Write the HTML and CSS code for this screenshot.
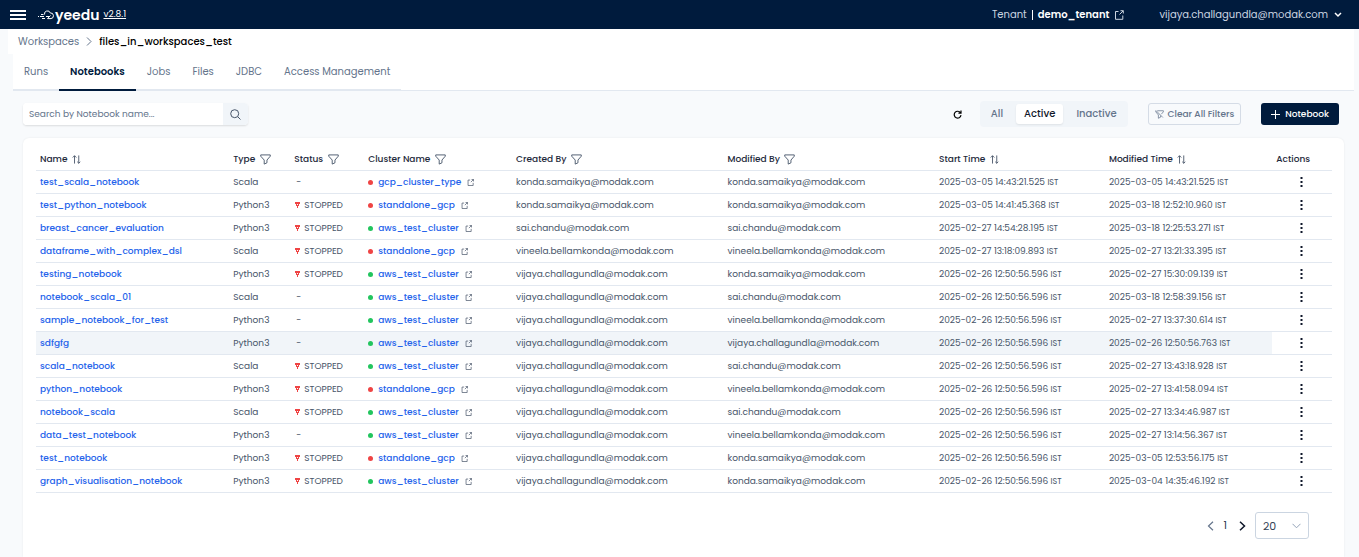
FILE: index.html
```html
<!DOCTYPE html>
<html lang="en">
<head>
  <meta charset="UTF-8" />
  <meta name="viewport" content="width=device-width, initial-scale=1.0"/>
  <title>Yeedu - Notebooks</title>
  <link rel="stylesheet" href="styles.css">
</head>
<body>

  <!-- shared icons -->
  <svg class="sprite" aria-hidden="true">
    <symbol id="icon-sort" viewBox="0 0 10 10">
      <path d="M2.8 9.5V.8M.8 2.8l2-2 2 2M7.5.5v8.7M5.8 7.5l1.7 1.7 1.7-1.7"/>
    </symbol>
    <symbol id="icon-filter" viewBox="0 0 12 12">
      <path d="M.8 1h10.4v1.4L7.6 6.6v3L4.6 11V6.6L.8 2.4z"/>
    </symbol>
    <symbol id="icon-external" viewBox="0 0 10 10">
      <path d="M4.500 1.500H1.500v7.800h7.300V5.500M6.500.7h2.800v2.800M9.200.8L5.500 4.500"/>
    </symbol>
    <symbol id="icon-stopped" viewBox="0 0 5 6">
      <path d="M0 0h5v2H0zM1 2h1v1H1zM3 2h1v1H3zM1 3h3v1H1zM2 4h1v2H2z"/>
    </symbol>
    <symbol id="icon-dots" viewBox="0 0 3 12">
      <path d="M.5 1h2v2h-2zM.5 5h2v2h-2zM.5 9h2v2h-2z"/>
    </symbol>
  </svg>

  <header class="topbar">
    <button class="icon-btn menu" aria-label="Menu">
      <svg width="16" height="12" viewBox="0 0 16 12"><path d="M0 2h16M0 6h16M0 10h16"/></svg>
    </button>
    <a href="#" class="logo">
      <svg width="16" height="10" viewBox="0 0 16 10"><path d="M3 4.500h2.500M0 6.500h1M2 6.500h4M4 8.500h3M6.500 4.500a3 3 0 0 1 5.800-1.500 2.800 2.800 0 0 1 .7 5.600H9.500L12.500 5.500M8 6.500h3"/></svg>
      <span>yeedu</span>
    </a>
    <a href="#" class="version">v2.8.1</a>
    <div class="tenant">
      <span>Tenant</span>
      <span class="divider"></span>
      <strong>demo_tenant</strong>
      <svg width="10" height="10"><use href="#icon-external"/></svg>
    </div>
    <button class="user">
      vijaya.challagundla@modak.com
      <svg width="8" height="6" viewBox="0 0 8 6"><path d="M1 1l3 3 3-3"/></svg>
    </button>
  </header>

  <main class="page">
    <nav class="breadcrumb" aria-label="Breadcrumb">
      <a href="#">Workspaces</a>
      <svg width="6" height="9" viewBox="0 0 6 9"><path d="M1 .5l4 4-4 4"/></svg>
      <span>files_in_workspaces_test</span>
    </nav>

    <nav class="tabs">
      <div class="tab-list">
        <a href="#">Runs</a>
        <a href="#" class="active">Notebooks</a>
        <a href="#">Jobs</a>
        <a href="#">Files</a>
        <a href="#">JDBC</a>
        <a href="#">Access Management</a>
      </div>
    </nav>

    <section class="content">
      <div class="controls">
        <form class="search">
          <input type="text" aria-label="Search notebooks" placeholder="Search by Notebook name...">
          <button type="button" aria-label="Search">
            <svg width="11" height="11" viewBox="0 0 11 11"><circle cx="4.700" cy="4.700" r="4"/><path d="M7.700 7.700l2.800 2.800"/></svg>
          </button>
        </form>
        <button class="icon-btn refresh" aria-label="Refresh">
          <svg width="9" height="9" viewBox="0 0 9 9"><path d="M7.500 2.800A3.400 3.400 0 1 0 8 5.200M8 .6v2.600H5.400"/></svg>
        </button>
        <div class="segmented">
          <button>All</button>
          <button class="active">Active</button>
          <button>Inactive</button>
        </div>
        <button class="clear-btn">
          <svg width="9" height="9" viewBox="0 0 12 12"><path d="M3 1h8.200v1.400L8.500 5.500M1 1.200v1.200l3.500 4.200V11l3-1.500v-2M1 .5l9.500 9.500"/></svg>
          Clear All Filters
        </button>
        <button class="primary-btn">
          <svg width="9" height="9" viewBox="0 0 9 9"><path d="M4.500 0v9M0 4.500h9"/></svg>
          Notebook
        </button>
      </div>

      <div class="card">
        <table>
          <colgroup>
            <col class="col-name"><col class="col-type"><col class="col-status">
            <col class="col-cluster"><col class="col-user"><col class="col-user">
            <col class="col-start"><col class="col-modified"><col class="col-actions">
          </colgroup>
          <thead>
            <tr>
              <th>Name <svg class="sort"><use href="#icon-sort"/></svg></th>
              <th>Type <svg class="filter"><use href="#icon-filter"/></svg></th>
              <th>Status <svg class="filter"><use href="#icon-filter"/></svg></th>
              <th>Cluster Name <svg class="filter"><use href="#icon-filter"/></svg></th>
              <th>Created By <svg class="filter"><use href="#icon-filter"/></svg></th>
              <th>Modified By <svg class="filter"><use href="#icon-filter"/></svg></th>
              <th>Start Time <svg class="sort"><use href="#icon-sort"/></svg></th>
              <th>Modified Time <svg class="sort"><use href="#icon-sort"/></svg></th>
              <th>Actions</th>
            </tr>
          </thead>
          <tbody id="notebookRows"></tbody>
        </table>

        <div class="pagination">
          <button class="icon-btn prev" aria-label="Previous page">
            <svg width="7" height="10" viewBox="0 0 7 10"><path d="M6 .8L1.500 5 6 9.200"/></svg>
          </button>
          <span class="page-number">1</span>
          <button class="icon-btn next" aria-label="Next page">
            <svg width="7" height="10" viewBox="0 0 7 10"><path d="M1 .8L5.500 5 1 9.200"/></svg>
          </button>
          <div class="page-size">
            <select aria-label="Rows per page">
              <option>10</option>
              <option selected>20</option>
              <option>50</option>
            </select>
            <svg width="9" height="6" viewBox="0 0 9 6"><path d="M.5 .8l4 4 4-4"/></svg>
          </div>
        </div>
      </div>
    </section>
  </main>

  <script>
    const konda = "konda.samaikya@modak.com";
    const sai = "sai.chandu@modak.com";
    const vineela = "vineela.bellamkonda@modak.com";
    const vijaya = "vijaya.challagundla@modak.com";
    const bulkStart = "2025-02-26 12:50:56.596";

    const notebooks = [
      { name: "test_scala_notebook", type: "Scala", stopped: false, cluster: "gcp_cluster_type", createdBy: konda, modifiedBy: konda, start: "2025-03-05 14:43:21.525", modified: "2025-03-05 14:43:21.525" },
      { name: "test_python_notebook", type: "Python3", stopped: true, cluster: "standalone_gcp", createdBy: konda, modifiedBy: konda, start: "2025-03-05 14:41:45.368", modified: "2025-03-18 12:52:10.960" },
      { name: "breast_cancer_evaluation", type: "Python3", stopped: true, cluster: "aws_test_cluster", createdBy: sai, modifiedBy: sai, start: "2025-02-27 14:54:28.195", modified: "2025-03-18 12:25:53.271" },
      { name: "dataframe_with_complex_dsl", type: "Scala", stopped: true, cluster: "standalone_gcp", createdBy: vineela, modifiedBy: vineela, start: "2025-02-27 13:18:09.893", modified: "2025-02-27 13:21:33.395" },
      { name: "testing_notebook", type: "Python3", stopped: true, cluster: "aws_test_cluster", createdBy: vijaya, modifiedBy: konda, start: bulkStart, modified: "2025-02-27 15:30:09.139" },
      { name: "notebook_scala_01", type: "Scala", stopped: false, cluster: "aws_test_cluster", createdBy: vijaya, modifiedBy: sai, start: bulkStart, modified: "2025-03-18 12:58:39.156" },
      { name: "sample_notebook_for_test", type: "Python3", stopped: false, cluster: "aws_test_cluster", createdBy: vijaya, modifiedBy: vineela, start: bulkStart, modified: "2025-02-27 13:37:30.614" },
      { name: "sdfgfg", type: "Python3", stopped: false, cluster: "aws_test_cluster", createdBy: vijaya, modifiedBy: vijaya, start: bulkStart, modified: "2025-02-26 12:50:56.763", highlighted: true },
      { name: "scala_notebook", type: "Scala", stopped: true, cluster: "aws_test_cluster", createdBy: vijaya, modifiedBy: sai, start: bulkStart, modified: "2025-02-27 13:43:18.928" },
      { name: "python_notebook", type: "Python3", stopped: true, cluster: "standalone_gcp", createdBy: vijaya, modifiedBy: vineela, start: bulkStart, modified: "2025-02-27 13:41:58.094" },
      { name: "notebook_scala", type: "Scala", stopped: true, cluster: "aws_test_cluster", createdBy: vijaya, modifiedBy: sai, start: bulkStart, modified: "2025-02-27 13:34:46.987" },
      { name: "data_test_notebook", type: "Python3", stopped: false, cluster: "aws_test_cluster", createdBy: vijaya, modifiedBy: vineela, start: bulkStart, modified: "2025-02-27 13:14:56.367" },
      { name: "test_notebook", type: "Python3", stopped: true, cluster: "standalone_gcp", createdBy: vijaya, modifiedBy: konda, start: bulkStart, modified: "2025-03-05 12:53:56.175" },
      { name: "graph_visualisation_notebook", type: "Python3", stopped: true, cluster: "aws_test_cluster", createdBy: vijaya, modifiedBy: konda, start: bulkStart, modified: "2025-03-04 14:35:46.192" }
    ];

    const notebookRows = document.getElementById("notebookRows");

    notebooks.forEach(nb => {
      const row = document.createElement("tr");
      if (nb.highlighted) row.className = "highlighted";
      const running = nb.cluster === "aws_test_cluster";
      const status = nb.stopped
        ? `<span class="status"><svg><use href="#icon-stopped"/></svg>STOPPED</span>`
        : `<span class="no-status">-</span>`;
      row.innerHTML = `
        <td><a href="#">${nb.name}</a></td>
        <td>${nb.type}</td>
        <td>${status}</td>
        <td>
          <div class="cluster">
            <span class="dot ${running ? "running" : "down"}"></span>
            <a href="#">${nb.cluster}</a>
            <svg><use href="#icon-external"/></svg>
          </div>
        </td>
        <td>${nb.createdBy}</td>
        <td>${nb.modifiedBy}</td>
        <td>${nb.start} <small>IST</small></td>
        <td>${nb.modified} <small>IST</small></td>
        <td class="actions"><button class="icon-btn" aria-label="Actions for ${nb.name}"><svg><use href="#icon-dots"/></svg></button></td>
      `;
      notebookRows.appendChild(row);
    });
  </script>

</body>
</html>
```
FILE: styles.css
```css
* { box-sizing: border-box; }

body {
  font-family: 'Poppins', 'Inter', sans-serif;
  font-size: 10px;
  background: #f8fafc;
  color: #475569;
  margin: 0;
  min-height: 100vh;
  display: flex;
  flex-direction: column;
}

a { text-decoration: none; color: inherit; }

button, input, select {
  font: inherit;
  color: inherit;
}

button {
  display: flex;
  align-items: center;
  border: none;
  background: none;
  padding: 0;
  cursor: pointer;
}

svg {
  fill: none;
  stroke: currentColor;
  flex-shrink: 0;
}

.sprite {
  display: block;
  width: 0;
  height: 0;
  position: absolute;
}

/* top bar */
.topbar {
  display: flex;
  align-items: center;
  height: 29px;
  padding: 0 17px 0 10px;
  background: #001b3d;
  color: #cbd5e1;
}

.menu { color: #fff; }
.menu svg { stroke-width: 2; }

.logo {
  display: flex;
  align-items: center;
  gap: 1px;
  margin-left: 12px;
  color: #fff;
  font-size: 14px;
  font-weight: 600;
  line-height: 20px;
}

.version {
  margin-left: 4px;
  font-size: 9px;
  color: #fff;
  text-decoration: underline;
}

.tenant {
  display: flex;
  align-items: center;
  gap: 5px;
  margin-left: auto;
}

.tenant strong { color: #fff; font-weight: 600; }

.divider {
  width: 1px;
  height: 10px;
  background: #fff;
}

.user {
  gap: 6px;
  margin-left: 35px;
}

.user svg { stroke: #fff; stroke-width: 1.5; }

/* page */
.page {
  flex: 1;
  display: flex;
  flex-direction: column;
  padding: 0 5px 0 8px;
}

.breadcrumb {
  display: flex;
  align-items: center;
  gap: 7px;
  height: 25px;
  padding: 0 10px;
  background: #fff;
  color: #000;
  font-weight: 500;
}

.breadcrumb a, .breadcrumb svg { color: #64748b; }
.breadcrumb a { font-weight: 400; }

.tabs {
  margin-left: 5px;
  background: #fff;
  border-bottom: 1px solid #e2e8f0;
}

.tab-list {
  display: flex;
  width: max-content;
  margin-bottom: -1px;
  border-bottom: 2px solid #e2e8f0;
}

.tab-list a {
  padding: 0 11px;
  margin-bottom: -2px;
  line-height: 35px;
  color: #64748b;
  border-bottom: 2px solid transparent;
}

.tab-list a.active {
  color: #001b3d;
  font-weight: 600;
  border-bottom-color: #001b3d;
}

.content {
  flex: 1;
  display: flex;
  flex-direction: column;
  padding: 10px 10px 0 15px;
}

/* controls */
.controls {
  display: flex;
  align-items: center;
  height: 26px;
}

.search {
  display: flex;
  height: 22px;
  margin-right: auto;
  border-radius: 4px;
  background: #fff;
  box-shadow: 0 1px 2px rgba(0,0,0,0.12);
  overflow: hidden;
}

.search input {
  width: 200px;
  padding: 0 6px;
  border: none;
  font-size: 9px;
}

.search input::placeholder { color: #64748b; }

.search button {
  width: 25px;
  justify-content: center;
  background: #f1f5f9;
}

.refresh { color: #000; margin-right: 18px; }
.refresh svg { stroke-width: 1.2; }

.segmented {
  display: flex;
  gap: 5px;
  padding: 3px;
  margin-right: 20px;
  border-radius: 4px;
  background: #f1f5f9;
}

.segmented button {
  height: 20px;
  padding: 0 8px;
  border-radius: 3px;
  font-weight: 500;
  color: #64748b;
}

.segmented .active {
  background: #fff;
  color: #0f172a;
  box-shadow: 0 1px 2px rgba(0,0,0,0.08);
}

.clear-btn, .primary-btn {
  height: 22px;
  border-radius: 3px;
  font-size: 9px;
  font-weight: 500;
}

.clear-btn {
  gap: 4px;
  padding: 0 6px;
  margin-right: 20px;
  border: 1px solid #d5dce6;
  color: #64748b;
}

.primary-btn {
  gap: 5px;
  padding: 0 10px;
  margin-right: 5px;
  background: #001b3d;
  color: #fff;
}

/* table */
.card {
  flex: 1;
  padding: 10px 12px 17px 13px;
  margin-top: 11px;
  border-radius: 6px 6px 0 0;
  background: #fff;
  box-shadow: 0 0 2px rgba(0,0,0,0.08);
}

table {
  width: 100%;
  table-layout: fixed;
  border-spacing: 0;
}

.col-name { width: 14.9%; }
.col-type { width: 4.7%; }
.col-status { width: 5.7%; }
.col-cluster { width: 11.4%; }
.col-user { width: 16.3%; }
.col-start { width: 13.1%; }
.col-modified { width: 12.9%; }
.col-actions { width: 4.6%; }

th, td {
  height: 23px;
  padding: 0 4px;
  font-size: 9px;
  line-height: 16px;
  text-align: left;
  white-space: nowrap;
  border-bottom: 1px solid #e2e8f0;
}

th { font-weight: 500; color: #1e293b; }

th svg { margin-left: 2px; vertical-align: middle; color: #475569; }
.sort { width: 9px; height: 9px; }
.filter { width: 11px; height: 11px; }

td a { color: #2563eb; font-weight: 500; }
td small { font-size: 8px; line-height: 1; }

.highlighted td { background: #f1f5f9; }
.highlighted .actions { background: #fff; }

.status {
  display: flex;
  align-items: center;
  gap: 4px;
}

.status svg {
  width: 5px;
  height: 6px;
  margin-left: 1px;
  fill: #ef4444;
  stroke: none;
}

.no-status { margin-left: 2px; }

.cluster {
  display: flex;
  align-items: center;
}

.cluster svg {
  width: 7px;
  height: 7px;
  margin-left: 6px;
}

.dot {
  width: 5px;
  height: 5px;
  margin-right: 5px;
  border-radius: 50%;
}

.dot.running { background: #22c55e; }
.dot.down { background: #ef4444; }

.actions .icon-btn {
  width: 100%;
  justify-content: center;
  padding-right: 2px;
}

.actions svg {
  width: 3px;
  height: 12px;
  fill: #0f172a;
  stroke: none;
}

/* pagination */
.pagination {
  display: flex;
  align-items: center;
  justify-content: flex-end;
  gap: 9px;
  margin: 19px 23px 0 0;
  color: #334155;
}

.prev { color: #64748b; }
.next { color: #0f172a; }
.prev svg { stroke-width: 1.2; }
.next svg { stroke-width: 1.5; }
.page-number { padding: 0 3px 0 0; font-size: 11px; }

.page-size {
  display: grid;
  align-items: center;
  width: 54px;
}

.page-size select, .page-size svg { grid-area: 1 / 1; }

.page-size select {
  width: 100%;
  height: 27px;
  padding: 0 7px;
  border: 1px solid #cbd5e1;
  border-radius: 3px;
  background: #fff;
  font-size: 11px;
  appearance: none;
}

.page-size svg {
  justify-self: end;
  margin-right: 8px;
  color: #94a3b8;
  pointer-events: none;
}
```
